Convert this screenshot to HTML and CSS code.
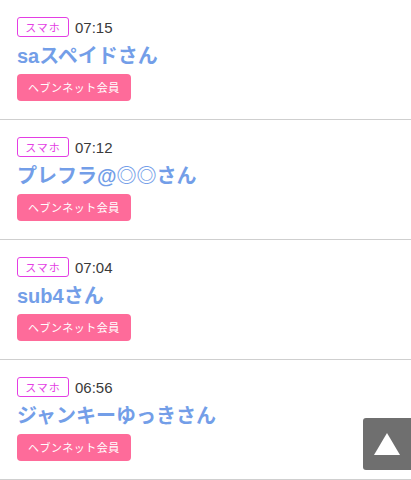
FILE: index.html
```html
<!DOCTYPE html>
<html lang="ja">
<head>
    <meta charset="UTF-8" />
    <meta name="viewport" content="width=device-width, initial-scale=1" />
    <title>口コミ一覧</title>
    <link rel="stylesheet" href="styles.css">
</head>
<body>
    <ul class="visit-list">
        <li class="visit">
            <div class="visit-head">
                <span class="device">スマホ</span>
                <span class="time">07:15</span>
            </div>
            <div class="name">saスペイドさん</div>
            <span class="member">ヘブンネット会員</span>
        </li>
        <li class="visit">
            <div class="visit-head">
                <span class="device">スマホ</span>
                <span class="time">07:12</span>
            </div>
            <div class="name">プレフラ@◎◎さん</div>
            <span class="member">ヘブンネット会員</span>
        </li>
        <li class="visit">
            <div class="visit-head">
                <span class="device">スマホ</span>
                <span class="time">07:04</span>
            </div>
            <div class="name">sub4さん</div>
            <span class="member">ヘブンネット会員</span>
        </li>
        <li class="visit">
            <div class="visit-head">
                <span class="device">スマホ</span>
                <span class="time">06:56</span>
            </div>
            <div class="name">ジャンキーゆっきさん</div>
            <span class="member">ヘブンネット会員</span>
        </li>
    </ul>

    <a class="page-top" href="#">
        <svg width="26" height="22" viewBox="0 0 26 22"><polygon points="13,0 26,22 0,22" fill="#fff"/></svg>
    </a>
</body>
</html>
```

FILE: styles.css
```css
body {
    font-family: "Noto Sans CJK JP", "Noto Sans", sans-serif;
    margin: 0;
    padding: 0;
    background-color: #fff;
    color: #333;
}

.visit-list {
    list-style: none;
    margin: 0;
    padding: 0;
}

.visit {
    height: 120px;
    box-sizing: border-box;
    padding: 17px 17px 0;
    border-bottom: 1px solid #cfcfcf;
}

.visit-head {
    display: flex;
    align-items: center;
    gap: 6px;
    height: 20px;
}

.device {
    box-sizing: border-box;
    height: 20px;
    width: 52px;
    border: 1px solid #e43ee4;
    border-radius: 3px;
    color: #e43ee4;
    font-size: 11px;
    line-height: 18px;
    text-align: center;
    letter-spacing: 1px;
}

.time {
    font-family: "Liberation Sans", Arial, sans-serif;
    font-size: 15px;
    color: #3a3a3a;
}

.name {
    margin-top: 4px;
    height: 30px;
    line-height: 30px;
    font-family: "Liberation Sans", "Noto Sans CJK JP", sans-serif;
    font-size: 20px;
    font-weight: bold;
    color: #739ee8;
}

.member {
    display: inline-block;
    margin-top: 3px;
    height: 27px;
    line-height: 27px;
    padding: 0 11px;
    border-radius: 4px;
    background-color: #fe6b9a;
    color: #fff;
    font-size: 11px;
    letter-spacing: 0.5px;
}

.page-top {
    position: fixed;
    right: 0;
    top: 418px;
    width: 48px;
    height: 52px;
    border-radius: 3px 0 0 3px;
    background-color: #6f6f6f;
    display: flex;
    align-items: center;
    justify-content: center;
}
```
